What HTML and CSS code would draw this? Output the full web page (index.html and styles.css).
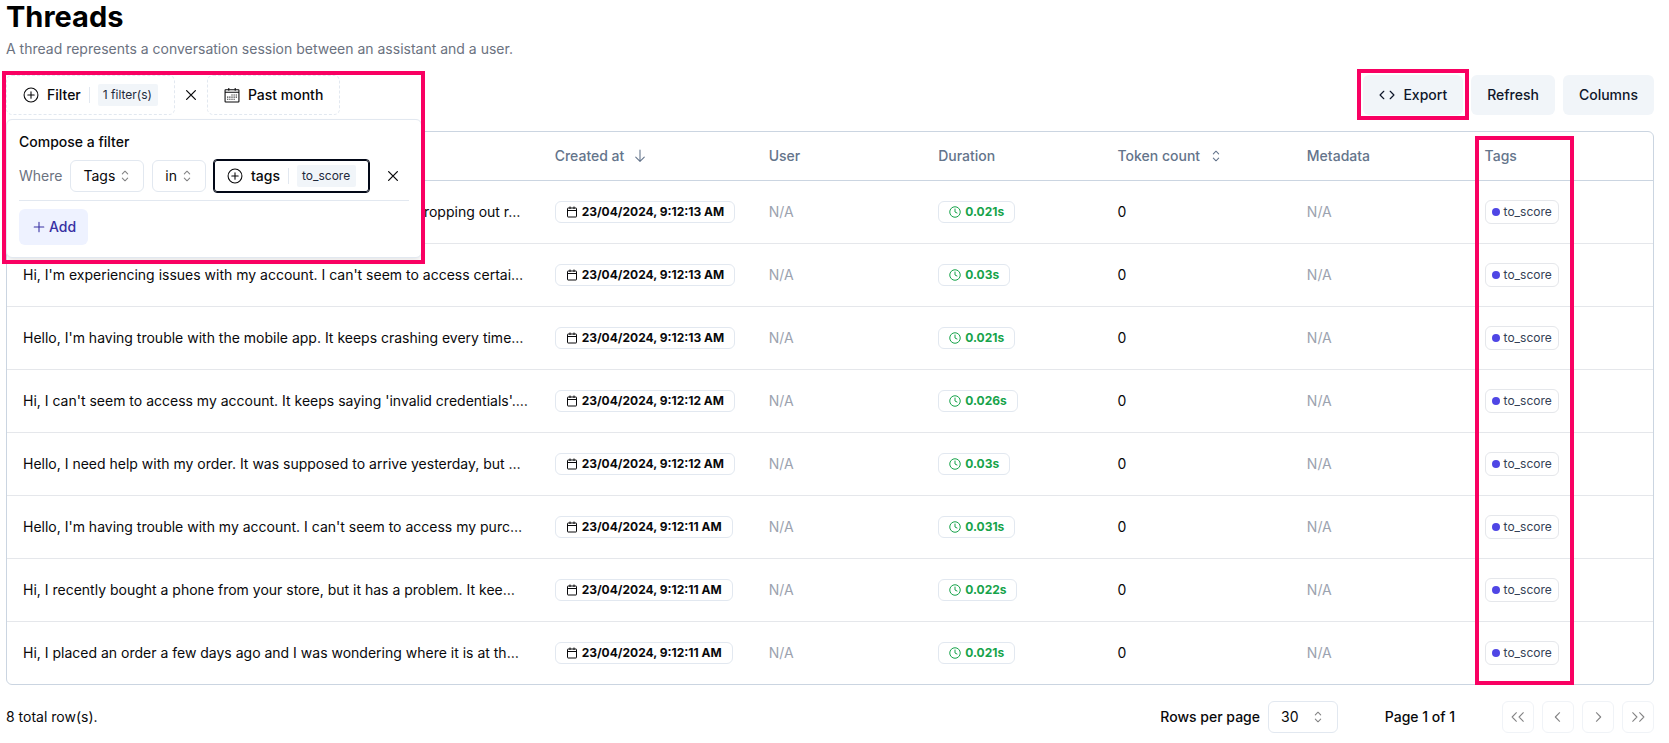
FILE: index.html
```html
<!DOCTYPE html>
<html lang="en">
<head>
<meta charset="utf-8">
<title>Threads</title>
<link rel="stylesheet" href="styles.css">
</head>
<body>
<svg class="sprite" aria-hidden="true">
  <symbol id="plus-circle" viewBox="0 0 15 15"><circle cx="7.5" cy="7.5" r="6.5" fill="none" stroke="currentColor"/><path d="M7.5 4.5v6M4.5 7.5h6" fill="none" stroke="currentColor" stroke-linecap="round"/></symbol>
  <symbol id="cross" viewBox="0 0 15 15"><path d="M3.400 3.400l8.200 8.200M11.600 3.400l-8.200 8.200" fill="none" stroke="currentColor" stroke-width="1.200" stroke-linecap="round"/></symbol>
  <symbol id="calendar" viewBox="0 0 15 15"><path d="M1.500 2.500h12a.5.5 0 0 1 .5.5v10.500a.5.5 0 0 1-.5.5h-12a.5.5 0 0 1-.5-.5V3a.5.5 0 0 1 .5-.5zM1 5h13M4.500 1v2.500M10.500 1v2.500" fill="none" stroke="currentColor"/><path d="M7 7.500h6M3 9.500h10M3 11.500h7" fill="none" stroke="currentColor" stroke-dasharray="1 1"/></symbol>
  <symbol id="sort" viewBox="0 0 15 15"><path d="M5 5.500l2.500-2.500L10 5.500M5 9.500l2.500 2.500L10 9.500" fill="none" stroke="currentColor" stroke-linecap="round" stroke-linejoin="round"/></symbol>
  <symbol id="arrow-down" viewBox="0 0 15 15"><path d="M7.500 2v10.500M3.500 8.500l4 4 4-4" fill="none" stroke="currentColor" stroke-linecap="round" stroke-linejoin="round"/></symbol>
  <symbol id="code" viewBox="0 0 15 15"><path d="M4.500 4L1 7.500 4.500 11M10.500 4L14 7.500 10.500 11" fill="none" stroke="currentColor" stroke-width="1.100" stroke-linecap="round" stroke-linejoin="round"/></symbol>
  <symbol id="plus" viewBox="0 0 15 15"><path d="M7.500 3v9M3 7.500h9" fill="none" stroke="currentColor" stroke-linecap="round"/></symbol>
  <symbol id="date" viewBox="0 0 24 24"><path d="M4 4h16a1 1 0 0 1 1 1v16a1 1 0 0 1-1 1H4a1 1 0 0 1-1-1V5a1 1 0 0 1 1-1zM3 9h18M8 1v5M16 1v5" fill="none" stroke="currentColor" stroke-width="2"/></symbol>
  <symbol id="clock" viewBox="0 0 24 24"><path d="M12 6v6l4 2" fill="none" stroke="currentColor" stroke-width="2" stroke-linecap="round"/><circle cx="12" cy="12" r="10.500" fill="none" stroke="currentColor" stroke-width="2"/></symbol>
  <symbol id="left" viewBox="0 0 15 15"><path d="M9 3.500l-4 4 4 4" fill="none" stroke="currentColor" stroke-linecap="round" stroke-linejoin="round"/></symbol>
  <symbol id="right" viewBox="0 0 15 15"><path d="M6 3.500l4 4-4 4" fill="none" stroke="currentColor" stroke-linecap="round" stroke-linejoin="round"/></symbol>
  <symbol id="first" viewBox="0 0 15 15"><path d="M6 3.500l-4 4 4 4M12.500 3.500l-4 4 4 4" fill="none" stroke="currentColor" stroke-linecap="round" stroke-linejoin="round"/></symbol>
  <symbol id="last" viewBox="0 0 15 15"><path d="M2.500 3.500l4 4-4 4M9 3.500l4 4-4 4" fill="none" stroke="currentColor" stroke-linecap="round" stroke-linejoin="round"/></symbol>
</svg>
<main class="page">
  <h1 class="title">Threads</h1>
  <p class="subtitle">A thread represents a conversation session between an assistant and a user.</p>

  <div class="toolbar">
    <div class="filters">
      <button class="btn dashed"><svg class="icon"><use href="#plus-circle"/></svg>Filter<span class="divider"></span><span class="chip">1 filter(s)</span></button>
      <button class="clear" aria-label="Clear filters"><svg class="icon"><use href="#cross"/></svg></button>
      <button class="btn dashed"><svg class="icon"><use href="#calendar"/></svg>Past month</button>
      <section class="popover">
        <h2 class="popover-title">Compose a filter</h2>
        <div class="rule">
          <span class="where">Where</span>
          <button class="btn small picker">Tags<svg class="icon faded"><use href="#sort"/></svg></button>
          <button class="btn small picker">in<svg class="icon faded"><use href="#sort"/></svg></button>
          <button class="btn small focused"><svg class="icon"><use href="#plus-circle"/></svg>tags<span class="divider"></span><span class="chip">to_score</span></button>
          <button class="clear" aria-label="Remove condition"><svg class="icon"><use href="#cross"/></svg></button>
        </div>
        <hr class="line">
        <button class="btn add"><svg class="icon"><use href="#plus"/></svg>Add</button>
      </section>
      <div class="mark mark-filter"></div>
    </div>
    <div class="actions">
      <div class="export-wrap">
        <button class="btn solid"><svg class="icon"><use href="#code"/></svg>Export</button>
        <div class="mark mark-export"></div>
      </div>
      <button class="btn solid">Refresh</button>
      <button class="btn solid">Columns</button>
    </div>
  </div>

  <div class="table-wrap">
    <table class="threads">
      <colgroup><col class="c-input"><col class="c-created"><col class="c-user"><col class="c-duration"><col class="c-tokens"><col class="c-meta"><col class="c-tags"></colgroup>
      <thead>
        <tr><th>Input</th><th><span class="sortable">Created at<svg class="icon"><use href="#arrow-down"/></svg></span></th><th>User</th><th>Duration</th><th><span class="sortable">Token count<svg class="icon"><use href="#sort"/></svg></span></th><th>Metadata</th><th class="tags-head">Tags<div class="mark mark-tags"></div></th></tr>
      </thead>
      <tbody id="rows"></tbody>
    </table>
  </div>

  <footer class="footer">
    <span class="total">8 total row(s).</span>
    <div class="pager">
      <div class="per-page">
        <label for="size">Rows per page</label>
        <div class="select-wrap"><select id="size"><option>30</option></select><svg class="icon caret"><use href="#sort"/></svg></div>
      </div>
      <span class="page-count">Page 1 of 1</span>
      <div class="pages">
        <button class="nav" disabled aria-label="First page"><svg class="icon"><use href="#first"/></svg></button>
        <button class="nav" disabled aria-label="Previous page"><svg class="icon"><use href="#left"/></svg></button>
        <button class="nav" disabled aria-label="Next page"><svg class="icon"><use href="#right"/></svg></button>
        <button class="nav" disabled aria-label="Last page"><svg class="icon"><use href="#last"/></svg></button>
      </div>
    </div>
  </footer>
</main>
<script src="script.js"></script>
</body>
</html>
```
FILE: script.js
```js
const threads = [
  ["Hi, my mobile internet connection is very slow and it keeps dropping out r…", "13", "0.021s"],
  ["Hi, I'm experiencing issues with my account. I can't seem to access certai…", "13", "0.03s"],
  ["Hello, I'm having trouble with the mobile app. It keeps crashing every time…", "13", "0.021s"],
  ["Hi, I can't seem to access my account. It keeps saying 'invalid credentials'.…", "12", "0.026s"],
  ["Hello, I need help with my order. It was supposed to arrive yesterday, but …", "12", "0.03s"],
  ["Hello, I'm having trouble with my account. I can't seem to access my purc…", "11", "0.031s"],
  ["Hi, I recently bought a phone from your store, but it has a problem. It kee…", "11", "0.022s"],
  ["Hi, I placed an order a few days ago and I was wondering where it is at th…", "11", "0.021s"]
];
document.getElementById("rows").innerHTML = threads.map(([text, sec, dur]) => `
  <tr>
    <td class="text">${text}</td>
    <td><span class="badge"><svg class="mini"><use href="#date"/></svg>23/04/2024, 9:12:${sec} AM</span></td>
    <td class="na">N/A</td>
    <td><span class="badge green"><svg class="mini"><use href="#clock"/></svg>${dur}</span></td>
    <td>0</td>
    <td class="na">N/A</td>
    <td><span class="tag"><span class="dot"></span>to_score</span></td>
  </tr>`).join("");
```
FILE: styles.css
```css
* { box-sizing: border-box; }
body { margin: 0; background: #fff; color: #09090b; font: 400 14px/20px Inter, "Liberation Sans", sans-serif; }
.sprite { position: absolute; width: 0; height: 0; }
.page { padding: 0 15px 0 6px; }
.icon { width: 16px; height: 16px; flex: none; }
button { font: inherit; color: inherit; background: none; border: 0; padding: 0; }
.title { margin: 0; font-size: 29px; line-height: 34px; font-weight: 700; color: #000; }
.subtitle { margin: 4px 0 16px; line-height: 21px; color: #6b7280; }

.toolbar { display: flex; justify-content: space-between; }
.filters, .export-wrap { position: relative; display: flex; }
.actions { display: flex; gap: 8px; }
.btn { display: flex; align-items: center; height: 40px; padding: 0 16px; border-radius: 6px; font-weight: 500; white-space: nowrap; gap: 8px; }
.dashed { border: 1px dashed #e2e8f0; }
.solid { background: #f1f5f9; color: #0f172a; }
.divider { width: 1px; height: 16px; background: #e2e8f0; }
.chip { padding: 0 6px 0 5px; border-radius: 2px; background: #f1f5f9; color: #1e293b; font-size: 12px; line-height: 22px; font-weight: 400; }
.clear { display: flex; align-items: center; padding: 0 8px; }

.popover { position: absolute; top: 44px; left: 0; z-index: 1; width: 416px; padding: 12px; display: flex; flex-direction: column; gap: 8px; background: #fff; border: 1px solid #e2e8f0; border-radius: 6px; box-shadow: 0 4px 6px -1px #0000001a; }
.popover-title { margin: 0; font-size: 14px; line-height: 20px; font-weight: 500; }
.rule { display: flex; align-items: center; gap: 8px; }
.where { color: #6b7280; }
.small { height: 32px; padding: 0 12px; border: 1px solid #e2e8f0; }
.picker { padding-right: 10px; gap: 2px; font-weight: 400; }
.faded { opacity: 0.5; }
.focused { border-color: #020817; outline: 1px solid #020817; border-radius: 3px; }
.line { width: 100%; margin: 0; border: 0; border-top: 1px solid #e2e8f0; }
.add { align-self: flex-start; height: 36px; padding: 0 12px; gap: 2px; background: #eef2ff; color: #3730a3; }

.mark { position: absolute; z-index: 2; border: 4px solid #f90062; pointer-events: none; }
.mark-filter { top: -4px; left: -4px; width: 423px; height: 193px; }
.mark-export { inset: -6px -6px -5px; }
.mark-tags { top: 4px; left: 6px; width: 99px; height: 549px; }

.table-wrap { margin-top: 16px; border: 1px solid #cbd5e1; border-radius: 6px; }
.threads { width: 100%; table-layout: fixed; border-collapse: separate; border-spacing: 0; }
.c-input { width: 32.3%; }
.c-created { width: 13%; }
.c-user { width: 10.3%; }
.c-duration { width: 10.9%; }
.c-tokens { width: 11.5%; }
.c-meta { width: 10.8%; }
.c-tags { width: 11.2%; }
.threads th { height: 49px; padding: 0 16px; text-align: left; font-weight: 500; color: #64748b; border-bottom: 1px solid #cbd5e1; }
.threads td { height: 63px; padding: 0 16px; border-bottom: 1px solid #e5e7eb; }
.threads tbody tr:last-child td { height: 62px; border-bottom: 0; }
.tags-head { position: relative; }
.sortable { display: flex; align-items: center; gap: 8px; }
.threads .text { padding-right: 8px; white-space: nowrap; overflow: hidden; text-overflow: ellipsis; }
.threads .na { color: #9ca3af; }
.badge, .tag { display: flex; align-items: center; width: max-content; border: 1px solid #e2e8f0; border-radius: 6px; font-size: 12px; line-height: 20px; }
.badge { gap: 4px; padding: 0 10px; font-weight: 700; }
.mini { width: 12px; height: 12px; }
.green { color: #16a34a; }
.tag { gap: 4px; padding: 1px 6px; color: #334155; border-color: #e5e7eb; }
.dot { width: 8px; height: 8px; border-radius: 50%; background: #4f46e5; }

.footer { display: flex; align-items: center; justify-content: space-between; margin-top: 16px; padding-bottom: 8px; }
.pager { display: flex; align-items: center; gap: 32px; font-weight: 500; }
.per-page, .pages { display: flex; align-items: center; gap: 8px; }
.select-wrap { position: relative; }
.select-wrap select { width: 70px; height: 32px; padding: 0 12px; appearance: none; background: #fff; border: 1px solid #e2e8f0; border-radius: 6px; font: inherit; font-weight: 400; color: inherit; }
.caret { position: absolute; top: 8px; right: 12px; opacity: 0.5; }
.page-count { width: 100px; text-align: center; }
.nav { display: flex; align-items: center; justify-content: center; width: 32px; height: 32px; border: 1px solid #e2e8f0; border-radius: 6px; opacity: 0.5; }
```
